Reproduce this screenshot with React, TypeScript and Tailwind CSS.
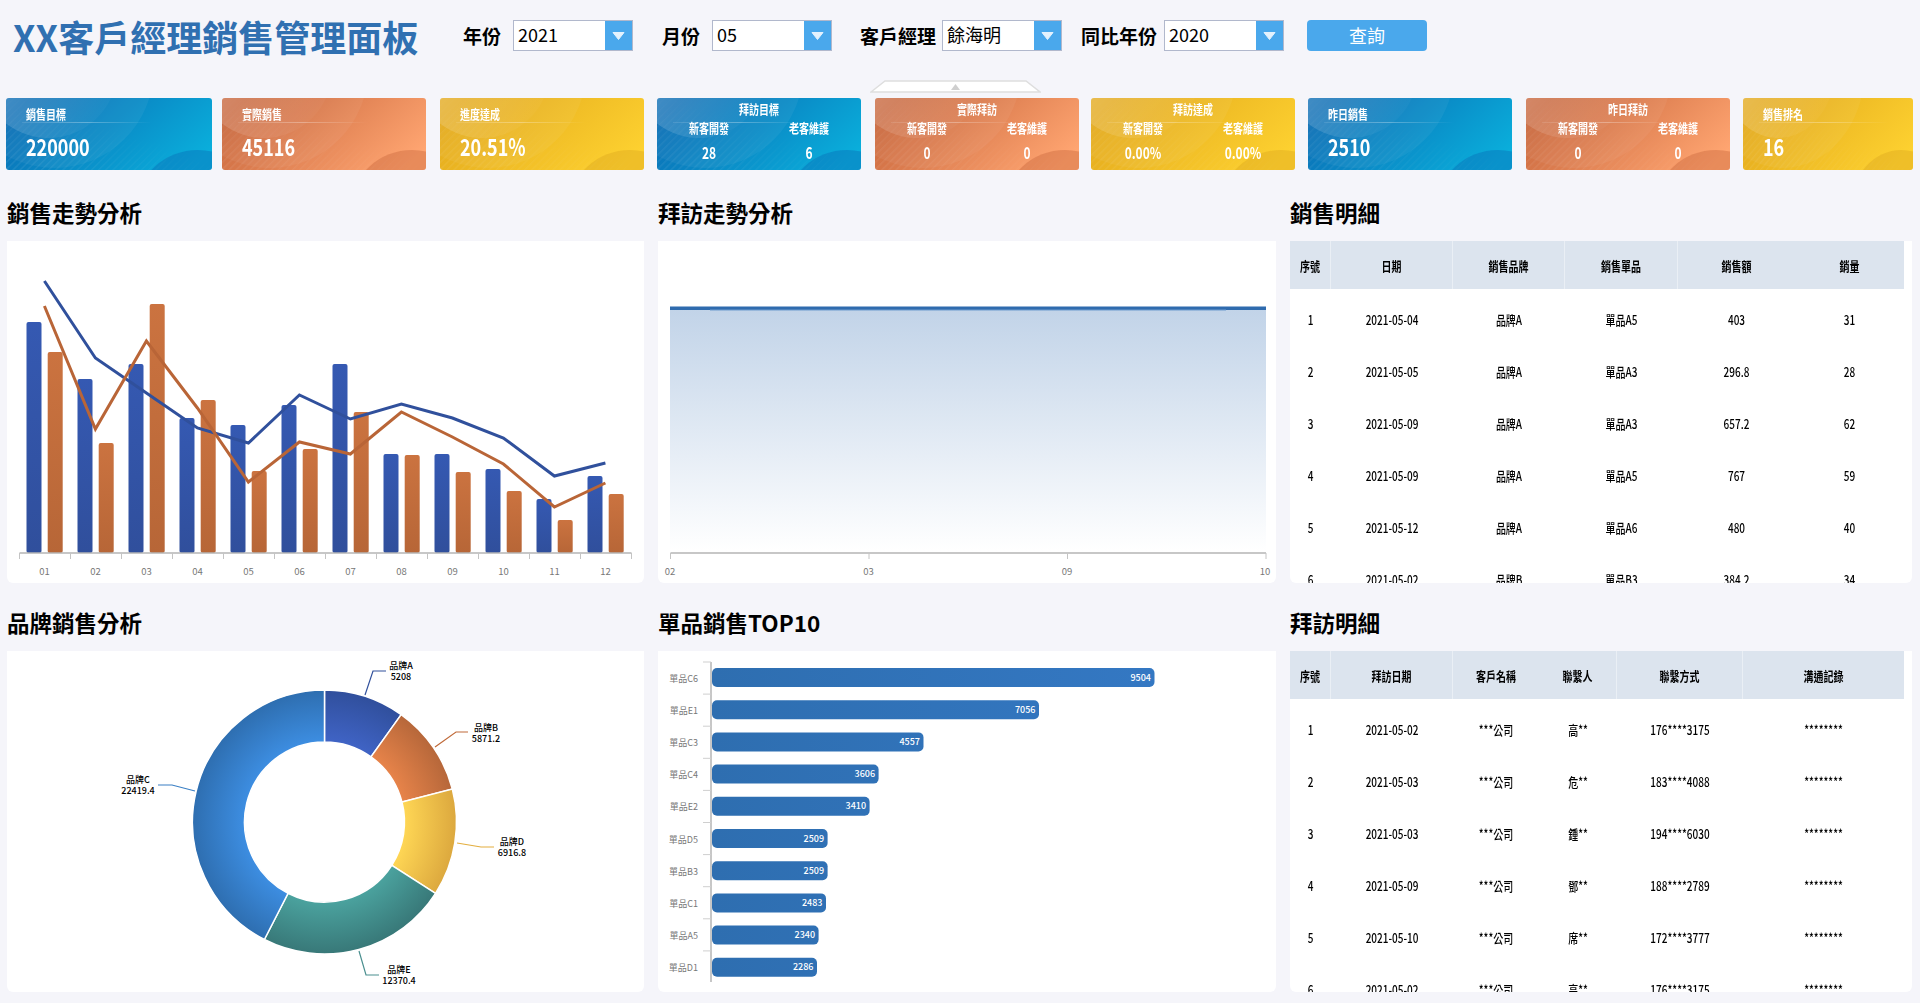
const blueTops = [81, 138, 123, 177, 184, 164, 123, 213, 213, 228, 258, 235];
const orangeTops = [111, 202, 63, 159, 230, 208, 171, 214, 231, 250, 279, 253];
const blueLine = [40, 117, 152, 187, 202, 154, 178, 163, 177, 197, 235, 222];
const orangeLine = [65, 188, 100, 167, 241, 201, 213, 171, 196, 223, 266, 242];
const months = ["01", "02", "03", "04", "05", "06", "07", "08", "09", "10", "11", "12"];

const donut = [
  { key: "a", name: "品牌A", value: 5208, text: "5208", inner: "#4064c6", outer: "#304f9c", line: "#30509c", pts: "358,44 366,20 379,20", x: 394, y: 14 },
  { key: "b", name: "品牌B", value: 5871.2, text: "5871.2", inner: "#e8844a", outer: "#b6673a", line: "#c06a3a", pts: "428,96 449,81 461,81", x: 479, y: 76 },
  { key: "d", name: "品牌D", value: 6916.8, text: "6916.8", inner: "#ffd755", outer: "#dca83e", line: "#e3ae3f", pts: "450,192 474,196 487,196", x: 505, y: 190 },
  { key: "e", name: "品牌E", value: 12370.4, text: "12370.4", inner: "#4ba39f", outer: "#387878", line: "#4a8f8f", pts: "352,300 359,324 372,324", x: 392, y: 318 },
  { key: "c", name: "品牌C", value: 22419.4, text: "22419.4", inner: "#3d8ee2", outer: "#2e6eb0", line: "#3a7fc4", pts: "188,140 165,134 151,134", x: 131, y: 128 },
];

const topItems = [
  { name: "單品C6", value: 9504, end: 496.5 },
  { name: "單品E1", value: 7056, end: 381 },
  { name: "單品C3", value: 4557, end: 265.5 },
  { name: "單品C4", value: 3606, end: 220.6 },
  { name: "單品E2", value: 3410, end: 211.6 },
  { name: "單品D5", value: 2509, end: 169.6 },
  { name: "單品B3", value: 2509, end: 169.6 },
  { name: "單品C1", value: 2483, end: 168 },
  { name: "單品A5", value: 2340, end: 160.6 },
  { name: "單品D1", value: 2286, end: 159 },
];

const salesRows = [
  ["1", "2021-05-04", "品牌A", "單品A5", "403", "31"],
  ["2", "2021-05-05", "品牌A", "單品A3", "296.8", "28"],
  ["3", "2021-05-09", "品牌A", "單品A3", "657.2", "62"],
  ["4", "2021-05-09", "品牌A", "單品A5", "767", "59"],
  ["5", "2021-05-12", "品牌A", "單品A6", "480", "40"],
  ["6", "2021-05-02", "品牌B", "單品B3", "384.2", "34"],
];

const visitRows = [
  ["1", "2021-05-02", "***公司", "高**", "176****3175", "********"],
  ["2", "2021-05-03", "***公司", "危**", "183****4088", "********"],
  ["3", "2021-05-03", "***公司", "鍾**", "194****6030", "********"],
  ["4", "2021-05-09", "***公司", "鄧**", "188****2789", "********"],
  ["5", "2021-05-10", "***公司", "席**", "172****3777", "********"],
  ["6", "2021-05-02", "***公司", "高**", "176****3175", "********"],
];

const themes = {
  blue: { from: "#0a6cb4", to: "#0aaedb", dark: "#0a6cb4" },
  orange: { from: "#c8663c", to: "#ffa571", dark: "#c8663c" },
  yellow: { from: "#e3a91c", to: "#fdd130", dark: "#dba71e" },
};

// 卡片背景的圓弧和斜紋
const CardDecor = ({ id, theme }: { id: string; theme: keyof typeof themes }) => {
  const t = themes[theme];
  return (
    <svg className="absolute inset-0 w-full h-full" preserveAspectRatio="none" viewBox="0 0 204 72">
      <defs>
        <linearGradient id={`${id}-bg`} x1="0" y1="0.3" x2="1" y2="0.7">
          <stop offset="0" stopColor={t.from} />
          <stop offset="1" stopColor={t.to} />
        </linearGradient>
        <linearGradient id={`${id}-arc`} x1="0" y1="0" x2="1" y2="0.6">
          <stop offset="0" stopColor="#fff" stopOpacity="0.3" />
          <stop offset="1" stopColor="#fff" stopOpacity="0.03" />
        </linearGradient>
        <linearGradient id={`${id}-fade`} x1="0" y1="1" x2="1" y2="0">
          <stop offset="0" stopColor="#fff" stopOpacity="0.9" />
          <stop offset="0.6" stopColor="#fff" stopOpacity="0" />
        </linearGradient>
        <pattern id={`${id}-stripe`} width="5" height="5" patternUnits="userSpaceOnUse" patternTransform="rotate(45)">
          <rect width="1.5" height="5" fill="#fff" fillOpacity="0.09" />
        </pattern>
        <mask id={`${id}-mask`}>
          <rect width="204" height="72" fill={`url(#${id}-fade)`} />
        </mask>
      </defs>
      <rect width="204" height="72" fill={`url(#${id}-bg)`} />
      <circle cx="48" cy="-28" r="98" fill="#fff" fillOpacity="0.05" />
      <circle cx="42" cy="-28" r="68" fill={`url(#${id}-arc)`} />
      <ellipse cx="190" cy="108" rx="60" ry="56" fill={t.dark} fillOpacity="0.42" />
      <rect width="204" height="72" fill={`url(#${id}-stripe)`} mask={`url(#${id}-mask)`} />
    </svg>
  );
};

const CardRule = () => (
  <div className="absolute left-[16px] top-[24px] h-px w-[130px] bg-gradient-to-r from-white/10 via-white/30 to-white/0" />
);

const SingleCard = ({ id, theme, label, value, className }: { id: string; theme: keyof typeof themes; label: string; value: string; className: string }) => (
  <div className={`relative h-[72px] overflow-hidden rounded-[3px] text-white ${className}`}>
    <CardDecor id={id} theme={theme} />
    <CardRule />
    <div className="relative pl-[20px]">
      <div className="h-[16px] pt-[8px] text-[10px] leading-[15px] font-bold">
        <span className="inline-block origin-center scale-y-[1.3]">{label}</span>
      </div>
      <div className="mt-[19px] text-[18px] leading-[26px] font-bold">
        <span className="inline-block origin-center scale-y-[1.3]">{value}</span>
      </div>
    </div>
  </div>
);

const DoubleCard = ({ id, theme, label, left, right, className }: { id: string; theme: keyof typeof themes; label: string; left: string; right: string; className: string }) => (
  <div className={`relative h-[72px] overflow-hidden rounded-[3px] text-white ${className}`}>
    <CardDecor id={id} theme={theme} />
    <CardRule />
    <div className="relative px-[2px] pt-[4px] text-center font-bold">
      <div className="text-[10px] leading-[14px]">
        <span className="inline-block scale-y-[1.3]">{label}</span>
      </div>
      <div className="mt-[5px] grid grid-cols-2 text-[10px] leading-[14px]">
        <span><span className="inline-block scale-y-[1.3]">新客開發</span></span>
        <span><span className="inline-block scale-y-[1.3]">老客維護</span></span>
      </div>
      <div className="mt-[9px] grid grid-cols-2 text-[12px] leading-[16px]">
        <span><span className="inline-block scale-y-[1.35]">{left}</span></span>
        <span><span className="inline-block scale-y-[1.35]">{right}</span></span>
      </div>
    </div>
  </div>
);

const Dropdown = ({ value, className }: { value: string; className: string }) => (
  <div className={`flex h-[31px] w-[120px] items-stretch border-[1.5px] border-[#b1b8cc] bg-white ${className}`}>
    <div className="flex-1 pl-[4px] text-[18px] leading-[27px] text-black">{value}</div>
    <div className="flex w-[27px] items-center justify-center bg-[#4aa8ec]">
      <svg width="13" height="8" viewBox="0 0 13 8">
        <path d="M1 0.5 H12 L6.5 7.5 Z" fill="#e4f2fd" stroke="#e4f2fd" strokeLinejoin="round" />
      </svg>
    </div>
  </div>
);

const Label = ({ text, className }: { text: string; className: string }) => (
  <span className={`text-[19px] leading-[31px] font-bold text-black ${className}`}>{text}</span>
);

const Section = ({ title, children }: { title: string; children: React.ReactNode }) => (
  <div>
    <h2 className="mb-[15px] h-[28px] text-[22.5px] leading-[28px] font-bold text-black">{title}</h2>
    {children}
  </div>
);

const XAxis = ({ ticks, y = 312 }: { ticks: number[]; y?: number }) => (
  <g>
    <line x1={ticks[0]} x2={ticks[ticks.length - 1]} y1={y} y2={y} stroke="#b5b5b5" strokeWidth="1.5" />
    {ticks.map((x) => (
      <line key={x} x1={x} x2={x} y1={y} y2={y + 6} stroke="#c4c4c4" />
    ))}
  </g>
);

const SalesTrend = () => (
  <svg className="block h-full w-full" viewBox="0 0 637 342">
    <defs>
      <linearGradient id="bar-blue" x1="0" y1="0" x2="0" y2="1">
        <stop offset="0" stopColor="#3559b2" />
        <stop offset="1" stopColor="#304f9c" />
      </linearGradient>
      <linearGradient id="bar-orange" x1="0" y1="0" x2="0" y2="1">
        <stop offset="0" stopColor="#cb7340" />
        <stop offset="1" stopColor="#b76637" />
      </linearGradient>
    </defs>
    {months.map((m, i) => (
      <g key={m}>
        <rect x={19.5 + 51 * i} y={blueTops[i]} width="15" height={312 - blueTops[i]} rx="2" fill="url(#bar-blue)" />
        <rect x={40.7 + 51 * i} y={orangeTops[i]} width="15" height={312 - orangeTops[i]} rx="2" fill="url(#bar-orange)" />
        <text x={37.4 + 51 * i} y="330" textAnchor="middle" dominantBaseline="central" fontSize="9.5" fill="#777">{m}</text>
      </g>
    ))}
    <polyline points={blueLine.map((y, i) => `${37.4 + 51 * i},${y}`).join(" ")} fill="none" stroke="#30509c" strokeWidth="3" />
    <polyline points={orangeLine.map((y, i) => `${37.4 + 51 * i},${y}`).join(" ")} fill="none" stroke="#b96537" strokeWidth="3" />
    <XAxis ticks={[...months.map((_, i) => 12.5 + 51 * i), 624.5]} />
  </svg>
);

const VisitTrend = () => (
  <svg className="block h-full w-full" viewBox="0 0 618 342">
    <defs>
      <linearGradient id="area-fill" x1="0" y1="0" x2="0" y2="1">
        <stop offset="0" stopColor="#c1d3e8" />
        <stop offset="1" stopColor="#ffffff" />
      </linearGradient>
    </defs>
    <rect x="12" y="67" width="596" height="243" fill="url(#area-fill)" />
    <rect x="12" y="65.5" width="596" height="3.5" fill="#2f6bae" />
    <rect x="52" y="68.5" width="516" height="1" fill="#6f9ccd" />
    <XAxis ticks={[12.5, 211, 409.5, 608]} />
    {[["02", 12], ["03", 210.5], ["09", 409], ["10", 607]].map(([t, x]) => (
      <text key={t} x={x} y="330" textAnchor="middle" dominantBaseline="central" fontSize="9.5" fill="#777">{t}</text>
    ))}
  </svg>
);

// 甜甜圈圖的弧段
const slicePath = (start: number, end: number, r0: number, r1: number, cx: number, cy: number) => {
  const p = (a: number, r: number) => `${cx + r * Math.sin(a)} ${cy - r * Math.cos(a)}`;
  const large = end - start > Math.PI ? 1 : 0;
  return `M${p(start, r1)} A${r1} ${r1} 0 ${large} 1 ${p(end, r1)} L${p(end, r0)} A${r0} ${r0} 0 ${large} 0 ${p(start, r0)} Z`;
};

const BrandDonut = () => {
  const total = donut.reduce((sum, d) => sum + d.value, 0);
  let angle = 0;
  return (
    <svg className="block h-full w-full" viewBox="0 0 637 341">
      <defs>
        {donut.map((d) => (
          <radialGradient key={d.key} id={`slice-${d.key}`} gradientUnits="userSpaceOnUse" cx="317.5" cy="171" r="132">
            <stop offset="0.6" stopColor={d.inner} />
            <stop offset="1" stopColor={d.outer} />
          </radialGradient>
        ))}
      </defs>
      {donut.map((d) => {
        const start = angle;
        angle += (d.value / total) * Math.PI * 2;
        return (
          <g key={d.key}>
            <path d={slicePath(start, angle, 80, 132, 317.5, 171)} fill={`url(#slice-${d.key})`} stroke="#fff" strokeWidth="1.5" />
            <polyline points={d.pts} fill="none" stroke={d.line} strokeWidth="1.2" />
            <text x={d.x} y={d.y} textAnchor="middle" dominantBaseline="central" fontSize="9" fontWeight="500" fill="#000">{d.name}</text>
            <text x={d.x} y={d.y + 11.5} textAnchor="middle" dominantBaseline="central" fontSize="9" fontWeight="500" fill="#000">{d.text}</text>
          </g>
        );
      })}
    </svg>
  );
};

const TopTen = () => (
  <svg className="block h-full w-full" viewBox="0 0 618 341">
    <defs>
      <linearGradient id="top-bar" gradientUnits="userSpaceOnUse" x1="54" y1="0" x2="500" y2="0">
        <stop offset="0" stopColor="#2e6eb0" />
        <stop offset="1" stopColor="#3478c3" />
      </linearGradient>
    </defs>
    <line x1="53" x2="53" y1="11" y2="331" stroke="#b5b5b5" strokeWidth="1.5" />
    {topItems.map((item, i) => (
      <g key={item.name}>
        <line x1="45" x2="53" y1={11 + 32.1 * i} y2={11 + 32.1 * i} stroke="#cfcfcf" />
        <rect x="54" y={26.5 + 32.2 * i - 9.5} width={item.end - 54} height="19" rx="5" fill="url(#top-bar)" />
        <text x={item.end - 3.5} y={26 + 32.2 * i} textAnchor="end" dominantBaseline="central" fontSize="9" fontWeight="500" fill="#fff">{item.value}</text>
        <text x="40" y={27 + 32.2 * i} textAnchor="end" dominantBaseline="central" fontSize="9" fill="#777">{item.name}</text>
      </g>
    ))}
  </svg>
);

const DataTable = ({ cols, heads, rows, lines }: { cols: string; heads: string[]; rows: string[][]; lines: boolean[] }) => (
  <div className="h-full w-[614px]">
    <div className={`grid h-[48px] ${cols} bg-[#dce4ee] text-[10px] font-bold text-black`}>
      {heads.map((h, i) => (
        <div key={h} className={`flex items-center justify-center ${lines[i] ? "border-r border-white/40" : ""}`}>
          <span className="inline-block scale-y-[1.3]">{h}</span>
        </div>
      ))}
    </div>
    <div className="pt-[4px] text-[10px] font-medium text-black">
      {rows.map((row) => (
        <div key={row[0]} className={`grid h-[52px] ${cols}`}>
          {row.map((cell, i) => (
            <div key={i} className="flex items-center justify-center">
              <span className="inline-block scale-y-[1.3]">{cell}</span>
            </div>
          ))}
        </div>
      ))}
    </div>
  </div>
);

const App = () => {
  return (
    <div className="relative h-[1003px] w-[1920px] overflow-hidden bg-[#f5f5fa] font-['Noto_Sans_CJK_TC','Liberation_Sans',sans-serif]">
      {/* 查詢條件 */}
      <div className="flex h-[98px] items-start pt-[20px] pl-[13px]">
        <h1 className="w-[450px] text-[36px] leading-[33px] font-bold whitespace-nowrap text-[#3070b1]">XX客戶經理銷售管理面板</h1>
        <Label text="年份" className="w-[50px]" />
        <Dropdown value="2021" className="mr-[29px]" />
        <Label text="月份" className="w-[50px]" />
        <Dropdown value="05" className="mr-[28px]" />
        <Label text="客戶經理" className="w-[82px]" />
        <Dropdown value="餘海明" className="mr-[19px]" />
        <Label text="同比年份" className="w-[83px]" />
        <Dropdown value="2020" className="mr-[23px]" />
        <button className="h-[31px] w-[120px] rounded-[4px] bg-[#4aa8ec] text-[18px] leading-[31px] text-white">查詢</button>
      </div>

      {/* 收合把手 */}
      <svg className="absolute top-[80px] left-[870px]" width="171" height="13" viewBox="0 0 171 13">
        <path d="M1 12 L15 1 H156 L170 12 Z" fill="#fff" stroke="#dedede" strokeWidth="1.5" />
        <path d="M81 10 L85.5 4 L90 10 Z" fill="#cfcfcf" />
      </svg>

      {/* 指標卡片 */}
      <div className="flex pl-[6px]">
        <SingleCard id="c1" theme="blue" label="銷售目標" value="220000" className="w-[206px]" />
        <SingleCard id="c2" theme="orange" label="實際銷售" value="45116" className="ml-[10px] w-[204px]" />
        <SingleCard id="c3" theme="yellow" label="進度達成" value="20.51%" className="ml-[14px] w-[204px]" />
        <DoubleCard id="c4" theme="blue" label="拜訪目標" left="28" right="6" className="ml-[13px] w-[204px]" />
        <DoubleCard id="c5" theme="orange" label="實際拜訪" left="0" right="0" className="ml-[14px] w-[204px]" />
        <DoubleCard id="c6" theme="yellow" label="拜訪達成" left="0.00%" right="0.00%" className="ml-[12px] w-[204px]" />
        <SingleCard id="c7" theme="blue" label="昨日銷售" value="2510" className="ml-[13px] w-[204px]" />
        <DoubleCard id="c8" theme="orange" label="昨日拜訪" left="0" right="0" className="ml-[14px] w-[204px]" />
        <SingleCard id="c9" theme="yellow" label="銷售排名" value="16" className="ml-[13px] w-[170px]" />
      </div>

      {/* 圖表和明細 */}
      <div className="mt-[28px] grid grid-cols-[637px_618px_622px] gap-x-[14px] pl-[7px]">
        <Section title="銷售走勢分析">
          <div className="h-[342px] overflow-hidden rounded-b-[6px] bg-white">
            <SalesTrend />
          </div>
        </Section>
        <Section title="拜訪走勢分析">
          <div className="h-[342px] overflow-hidden rounded-b-[6px] bg-white">
            <VisitTrend />
          </div>
        </Section>
        <Section title="銷售明細">
          <div className="h-[342px] overflow-hidden rounded-b-[6px] bg-white">
            <DataTable
              cols="grid-cols-[41px_122px_112px_113px_117px_1fr]"
              heads={["序號", "日期", "銷售品牌", "銷售單品", "銷售額", "銷量"]}
              rows={salesRows}
              lines={[true, true, true, true, false, false]}
            />
          </div>
        </Section>
      </div>

      <div className="mt-[25px] grid grid-cols-[637px_618px_622px] gap-x-[14px] pl-[7px]">
        <Section title="品牌銷售分析">
          <div className="h-[341px] overflow-hidden rounded-b-[6px] bg-white">
            <BrandDonut />
          </div>
        </Section>
        <Section title="單品銷售TOP10">
          <div className="h-[341px] overflow-hidden rounded-b-[6px] bg-white">
            <TopTen />
          </div>
        </Section>
        <Section title="拜訪明細">
          <div className="h-[341px] overflow-hidden rounded-b-[6px] bg-white">
            <DataTable
              cols="grid-cols-[41px_122px_86px_78px_126px_1fr]"
              heads={["序號", "拜訪日期", "客戶名稱", "聯繫人", "聯繫方式", "溝通記錄"]}
              rows={visitRows}
              lines={[true, true, false, true, true, false]}
            />
          </div>
        </Section>
      </div>
    </div>
  );
};

export default App;
